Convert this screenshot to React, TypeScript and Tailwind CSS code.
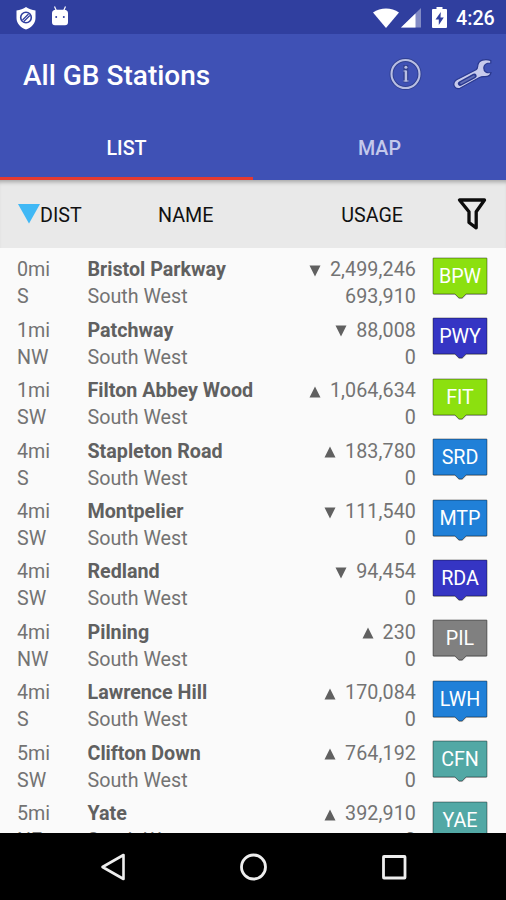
type Station = {
  dist: string;
  dir: string;
  name: string;
  trend: 'up' | 'down';
  usage: string;
  changes: string;
  code: string;
  color: string;
};

const GREEN = '#8ce00f';
const INDIGO = '#3535c4';
const BLUE = '#2080d8';
const GREY = '#808080';
const TEAL = '#52a8a5';

const stations: Station[] = [
  { dist: '0mi', dir: 'S', name: 'Bristol Parkway', trend: 'down', usage: '2,499,246', changes: '693,910', code: 'BPW', color: GREEN },
  { dist: '1mi', dir: 'NW', name: 'Patchway', trend: 'down', usage: '88,008', changes: '0', code: 'PWY', color: INDIGO },
  { dist: '1mi', dir: 'SW', name: 'Filton Abbey Wood', trend: 'up', usage: '1,064,634', changes: '0', code: 'FIT', color: GREEN },
  { dist: '4mi', dir: 'S', name: 'Stapleton Road', trend: 'up', usage: '183,780', changes: '0', code: 'SRD', color: BLUE },
  { dist: '4mi', dir: 'SW', name: 'Montpelier', trend: 'down', usage: '111,540', changes: '0', code: 'MTP', color: BLUE },
  { dist: '4mi', dir: 'SW', name: 'Redland', trend: 'down', usage: '94,454', changes: '0', code: 'RDA', color: INDIGO },
  { dist: '4mi', dir: 'NW', name: 'Pilning', trend: 'up', usage: '230', changes: '0', code: 'PIL', color: GREY },
  { dist: '4mi', dir: 'S', name: 'Lawrence Hill', trend: 'up', usage: '170,084', changes: '0', code: 'LWH', color: BLUE },
  { dist: '5mi', dir: 'SW', name: 'Clifton Down', trend: 'up', usage: '764,192', changes: '0', code: 'CFN', color: TEAL },
  { dist: '5mi', dir: 'NE', name: 'Yate', trend: 'up', usage: '392,910', changes: '0', code: 'YAE', color: TEAL },
];

function StatusBar() {
  return (
    <div className="flex h-[34px] shrink-0 items-center bg-[#303f9f] pl-4 pr-[11px] pt-px text-white">
      <svg className="h-[24px] w-[20px]" viewBox="0 0 20 24">
        <path d="M10 1C7.500 3 4 4 .5 4.500V12c0 5.500 4 9.500 9.500 11.500C15.500 21.500 19.500 17.500 19.500 12V4.500C16 4 12.500 3 10 1Z" fill="#fff" />
        <circle cx="10" cy="11.500" r="5.300" fill="none" stroke="#303f9f" strokeWidth="1.600" />
        <path d="m6.500 14 6-6M7.800 15.500l6-6" stroke="#303f9f" strokeWidth="1.200" />
      </svg>
      <svg className="-mt-[3px] ml-[15px] h-[22px] w-[18px]" viewBox="0 0 18 22">
        <path d="M3.500 1.500 5.500 6M14.500 1.500 12.500 6" stroke="#fff" strokeWidth="1.200" />
        <path d="M5 4.800h8q4 0 4 3.500v9q0 3-3 3H4q-3 0-3-3v-9q0-3.500 4-3.500Z" fill="#fff" />
        <circle cx="5.200" cy="12" r="1" fill="#303f9f" />
        <circle cx="12.800" cy="12" r="1" fill="#303f9f" />
      </svg>
      <div className="flex-1" />
      <svg className="h-[20px] w-[26px]" viewBox="0 0 26 20">
        <path d="M0 4.500C7.500-.8 18.500-.8 26 4.500L13 20Z" fill="#fff" />
      </svg>
      <svg className="ml-[2px] h-[20px] w-[20px]" viewBox="0 0 20 20">
        <path d="M20 0v19.500H0Z" fill="#fff" opacity=".4" />
        <path d="M14.500 5.500v14H0Z" fill="#fff" />
      </svg>
      <svg className="ml-[11px] h-[21px] w-[15px]" viewBox="0 0 15 21">
        <path d="M4.500 0h6v2H14q1 0 1 1v17q0 1-1 1H1q-1 0-1-1V3q0-1 1-1h3.500Z" fill="#fff" />
        <path d="M8.800 5 3.500 12.500h3.300V18l5-7.500H8.500Z" fill="#303f9f" />
      </svg>
      <span className="ml-[9px] w-[39px] whitespace-nowrap pt-[3px] text-[19.700px] font-medium leading-none">4:26</span>
    </div>
  );
}

function AppBar() {
  return (
    <div className="flex h-[80px] shrink-0 items-center pl-[23px] pr-[13px]">
      <h1 className="flex-1 pt-[3px] text-[28px] font-medium leading-none text-white">All GB Stations</h1>
      <svg className="h-[34px] w-[34px]" viewBox="0 0 34 34" fill="none">
        <circle cx="16.500" cy="17" r="14" stroke="#2f3f90" strokeWidth="4" />
        <path d="M16.800 8v17.500" stroke="#33418f" strokeWidth="5" />
        <circle cx="16.500" cy="17" r="14" stroke="#b9bfe3" strokeWidth="2.100" />
        <path d="M14.500 14h2.500M14.500 24h5" stroke="#b9bfe3" strokeWidth="1.200" />
        <path d="M16.900 13.500v11" stroke="#b9bfe3" strokeWidth="2.400" />
        <circle cx="16.900" cy="10.200" r="1.500" fill="#b9bfe3" />
      </svg>
      <svg className="ml-[30px] h-[32px] w-[40px]" viewBox="0 0 40 32" fill="none">
        <path
          d="M37.800 2.500C32 .5 25.500 2 24.800 7.500c-.2 2 0 3.200-1.800 4.300L3.500 21.800C-1.500 25 1.200 32 7 30.300L26.500 19.500c2.200-1.200 3.300-.9 5.500-.9 3.200 0 5.600-1.200 6-4-4.500.7-7.200-.7-7.200-4.600 0-3.700 2.200-5 7-5Z"
          fill="#c7caec"
          stroke="#29388f"
          strokeWidth="1.200"
        />
        <path d="m7.300 25.500 14-7.600" stroke="#29388f" strokeWidth="4.800" strokeLinecap="round" />
        <path d="m8 25.100 13-7" stroke="#5f6cb4" strokeWidth="1.800" strokeLinecap="round" />
      </svg>
    </div>
  );
}

function Tabs() {
  return (
    <div className="grid h-[66px] shrink-0 grid-cols-2 text-center text-[19.700px] font-medium">
      <div className="h-[66px] border-b-[3px] border-[#e53a30] pt-[3px] leading-[63px] text-white">LIST</div>
      <div className="h-[66px] pt-[3px] leading-[63px] text-[#c3c8eb]">MAP</div>
    </div>
  );
}

function ColumnHeader() {
  return (
    <div className="flex h-[68px] shrink-0 items-center bg-[#e9e9e9] pl-[18px] pr-[19px] text-[19.700px] leading-none text-[#111] shadow-[inset_0_5px_4px_-3px_rgba(0,0,0,0.3)]">
      <svg className="h-[20px] w-[22px]" viewBox="0 0 22 20">
        <path d="M0 0h22L11 19.500Z" fill="#40b8f5" />
      </svg>
      <span className="w-[118px] pt-[3px]">DIST</span>
      <span className="flex-1 pt-[3px]">NAME</span>
      <span className="pt-[3px]">USAGE</span>
      <svg className="ml-[54px] h-[34px] w-[30px]" viewBox="0 0 30 34" fill="none">
        <path d="M2.500 3h25l-8.300 11.800v16L12 25.500V14.800Z" stroke="#0c0c0c" strokeWidth="3.300" strokeLinejoin="round" />
      </svg>
    </div>
  );
}

function CodeBadge({ code, color }: { code: string; color: string }) {
  return (
    <div className="relative -mt-[0.500px] h-[41px] w-[56px]">
      <svg className="absolute inset-0 h-[43px] w-[56px]" viewBox="0 0 56 43">
        <path d="M1.500 2h53v36H34.500l-4 4h-3.500l-4-4H1.500Z" fill="#000" opacity=".22" />
        <path
          d="M1.500 1h53q.5 0 .5.500v35q0 .5-.5.500H34l-4 4h-3l-4-4H1.500q-.5 0-.5-.5v-35q0-.5.5-.5Z"
          fill={color}
          stroke="#000"
          strokeOpacity=".4"
          strokeWidth="1"
        />
      </svg>
      <span className="relative block text-center text-[19.700px] leading-[39px] text-white">{code}</span>
    </div>
  );
}

function Trend({ trend }: { trend: 'up' | 'down' }) {
  return (
    <svg className="mr-[9px] h-[12px] w-[12px]" viewBox="0 0 12 12">
      <path d={trend === 'up' ? 'M.5 11.500h11L6 .5Z' : 'M.5.5h11L6 11.500Z'} fill="#606060" />
    </svg>
  );
}

function StationRow({ station }: { station: Station }) {
  return (
    <div className="flex h-[60.450px] shrink-0 pl-[17px] pr-[18px] pt-2 text-[19.700px] leading-[26.900px] text-[#737373]">
      <div className="w-[70.500px]">
        <div>{station.dist}</div>
        <div>{station.dir}</div>
      </div>
      <div className="flex-1">
        <div className="font-bold text-[#606060]">{station.name}</div>
        <div>South West</div>
      </div>
      <div className="mr-4 flex flex-col items-end">
        <div className="flex items-center tracking-[0.1px]">
          <Trend trend={station.trend} />
          {station.usage}
        </div>
        <div className="tracking-[0.1px]">{station.changes}</div>
      </div>
      <CodeBadge code={station.code} color={station.color} />
    </div>
  );
}

function NavBar() {
  return (
    <div className="flex h-[67px] shrink-0 items-center justify-center gap-[113px] bg-black pl-px">
      <svg className="h-7 w-7" viewBox="0 0 28 28" fill="none">
        <path d="M24.500 2v24L3.500 14Z" stroke="#eee" strokeWidth="2.600" strokeLinejoin="round" />
      </svg>
      <svg className="h-7 w-7" viewBox="0 0 28 28" fill="none">
        <circle cx="13.500" cy="14" r="12" stroke="#eee" strokeWidth="2.800" />
      </svg>
      <svg className="h-7 w-7" viewBox="0 0 28 28" fill="none">
        <rect x="2.500" y="3.500" width="21.500" height="21.500" rx=".5" stroke="#eee" strokeWidth="2.800" />
      </svg>
    </div>
  );
}

export default function App() {
  return (
    <div className="flex h-[900px] w-[506px] flex-col overflow-hidden bg-[#fafafa] font-['Roboto',sans-serif]">
      <StatusBar />
      <div className="flex shrink-0 flex-col bg-[#3f51b5]">
        <AppBar />
        <Tabs />
      </div>
      <ColumnHeader />
      <div className="flex min-h-0 flex-1 flex-col overflow-hidden pt-[1.300px]">
        {stations.map((s) => (
          <StationRow key={s.code} station={s} />
        ))}
      </div>
      <NavBar />
    </div>
  );
}
